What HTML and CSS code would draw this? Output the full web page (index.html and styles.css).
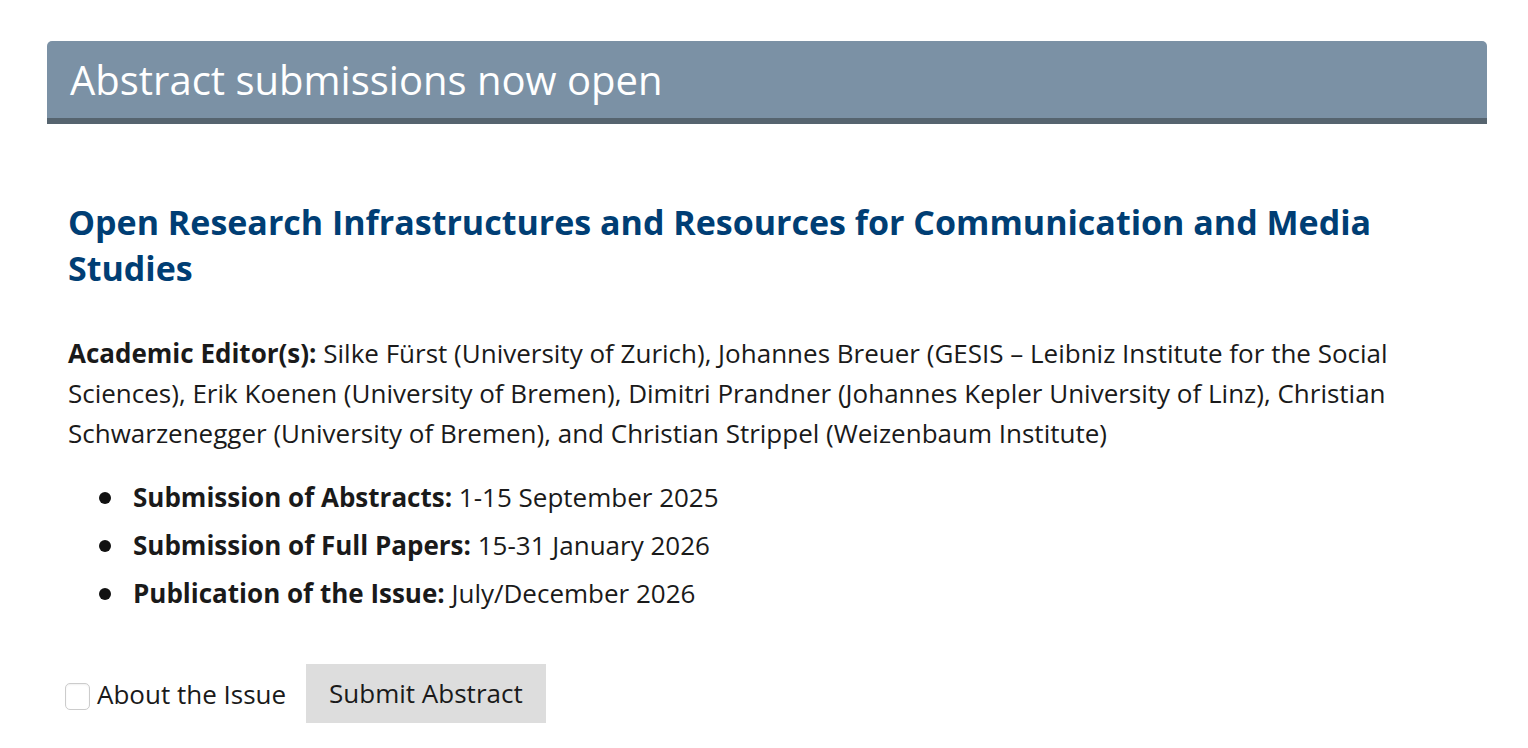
FILE: index.html
```html
<!DOCTYPE html>
<html>
	<head>
		<meta charset="UTF-8">
		<title>Abstract submissions now open</title>
		<link rel="stylesheet" href="styles.css">
	</head>
	<body>
		<div id="box">
			<h2 class="bar">Abstract submissions now open</h2>
			<div class="content">
				<h3 class="issue-title">Open Research Infrastructures and Resources for Communication and Media Studies</h3>
				<p class="editors"><strong>Academic Editor(s):</strong> Silke Fürst (University of Zurich), Johannes Breuer (GESIS – Leibniz Institute for the Social Sciences), Erik Koenen (University of Bremen), Dimitri Prandner (Johannes Kepler University of Linz), Christian Schwarzenegger (University of Bremen), and Christian Strippel (Weizenbaum Institute)</p>
				<ul class="dates">
					<li><span><strong>Submission of Abstracts:</strong> 1-15 September 2025</span></li>
					<li><span><strong>Submission of Full Papers:</strong> 15-31 January 2026</span></li>
					<li><span><strong>Publication of the Issue:</strong> July/December 2026</span></li>
				</ul>
				<div class="actions">
					<label class="about"><input type="checkbox"><span>About the Issue</span></label>
					<a class="btn" href="#">Submit Abstract</a>
				</div>
			</div>
		</div>
	</body>
</html>
```

FILE: styles.css
```css
body {
	margin: 0;
	font-family: "Open Sans", "Noto Sans", sans-serif;
	color: #1a1a1a;
	background: #fff;
}

#box {
	width: 1440px;
	margin: 41px 0 0 47px;
}

.bar {
	margin: 0;
	padding: 0 23px;
	height: 77px;
	line-height: 77px;
	background: #7b91a5;
	border-bottom: 6px solid #56646f;
	border-radius: 5px 5px 0 0;
	color: #fff;
	font-size: 40px;
	font-weight: normal;
}

.content {
	padding: 75px 21px 0;
}

.issue-title {
	margin: 0;
	color: #003e74;
	font-size: 34px;
	line-height: 46px;
	font-weight: bold;
}

.editors {
	margin: 42px 0 0;
	font-size: 26px;
	line-height: 40px;
}

.dates {
	margin: 20px 0 0;
	padding: 0 0 0 31px;
	list-style: none;
	font-size: 26px;
}

.dates li {
	display: flex;
	align-items: center;
	height: 48px;
}

/* bigger dot than the default disc */
.dates li::before {
	content: "";
	flex: none;
	width: 12px;
	height: 12px;
	margin: 1px 22px 0 0;
	border-radius: 50%;
	background: #111;
}

.actions {
	display: flex;
	align-items: center;
	margin-top: 47px;
}

.about {
	display: flex;
	align-items: center;
	font-size: 26px;
}

.about input {
	appearance: none;
	width: 25px;
	height: 27px;
	margin: 6px 7px 0 -3px;
	border: 1px solid #ccc;
	border-radius: 5px;
	background: #fff;
	box-shadow: inset 0 1px 2px rgba(0, 0, 0, 0.06);
}

.btn {
	margin-left: 20px;
	padding: 0 23px;
	height: 59px;
	line-height: 59px;
	background: #ddd;
	color: #1a1a1a;
	font-size: 26px;
	text-decoration: none;
}
```
